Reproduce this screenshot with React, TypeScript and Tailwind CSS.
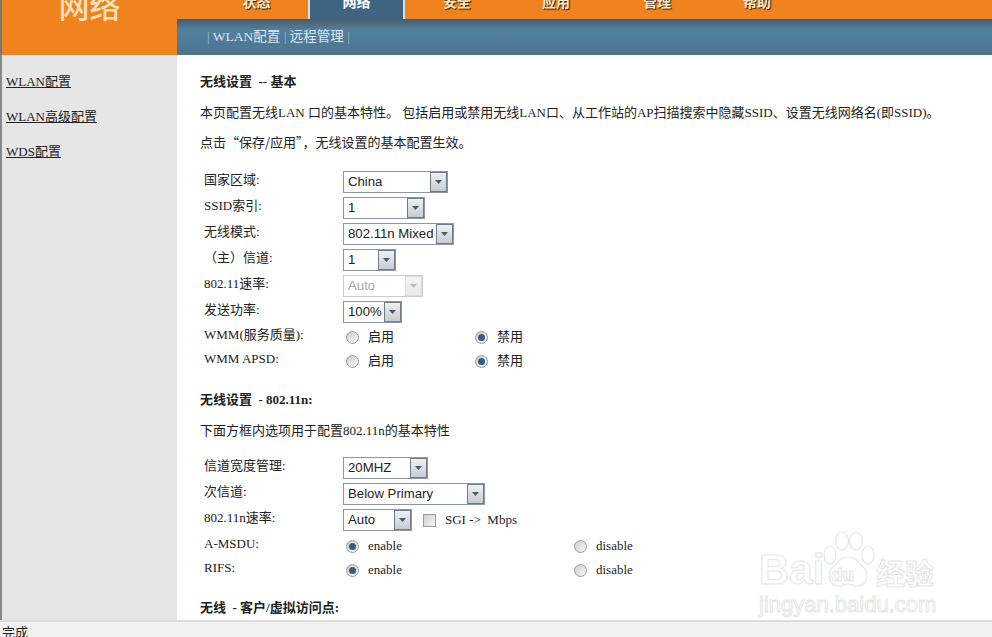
const cjk = "font-['Liberation_Serif','Noto_Sans_CJK_SC',serif]";

const tabs = [
  { label: "状态", width: "w-[131px] pl-[28px]" },
  { label: "网络", width: "w-[97px]", active: true },
  { label: "安全", width: "w-[104px]" },
  { label: "应用", width: "w-[94px]" },
  { label: "管理", width: "w-[108px]" },
  { label: "帮助", width: "w-[92px]" },
];

function Select({ value, width, disabled }: { value: string; width: string; disabled?: boolean }) {
  return (
    <div
      className={`flex h-[22px] items-center justify-between border pl-1 font-['Liberation_Sans',sans-serif] text-[13.2px] ${width} ${
        disabled ? "border-[#ccc] text-[#aaa]" : "border-[#8d98a4] text-[#222]"
      }`}
    >
      <span className="whitespace-nowrap">{value}</span>
      <span
        className={`flex h-full w-[17px] shrink-0 items-center justify-center border bg-gradient-to-b ${
          disabled ? "border-[#ddd] from-[#f4f4f4] to-[#e8e8e8]" : "border-[#6f7b86] from-[#eef0f3] to-[#c8ccd2]"
        }`}
      >
        <svg width="7" height="4" viewBox="0 0 7 4">
          <path d="M0 0h7L3.5 4z" fill={disabled ? "#bbb" : "#4d5a6b"} />
        </svg>
      </span>
    </div>
  );
}

function Radio({ checked }: { checked?: boolean }) {
  return (
    <span className="flex h-[13px] w-[13px] shrink-0 items-center justify-center rounded-full border border-[#9a9a9a] bg-gradient-to-br from-[#ccc] to-[#fafafa]">
      {checked && <span className="h-[7px] w-[7px] rounded-full bg-[#2f5f86]" />}
    </span>
  );
}

function Label({ text, className }: { text: string; className?: string }) {
  return <div className={`w-[143px] shrink-0 pl-1 text-[13px] text-[#222] ${className ?? ""}`}>{text}</div>;
}

function SelectRow({ label, children }: { label: string; children: React.ReactNode }) {
  return (
    <div className="flex h-[26px] items-center">
      <Label text={label} className="-mt-1" />
      {children}
    </div>
  );
}

function RadioRow({ label, on, off, first, cell }: { label: string; on: string; off: string; first?: boolean; cell: string }) {
  return (
    <div className="flex h-6 items-center">
      <Label text={label} className="-mt-1" />
      <div className={`flex items-center pl-[3px] ${cell}`}>
        <Radio checked={first} />
        <span className="ml-[9px] text-[13px]">{on}</span>
      </div>
      <div className="flex items-center">
        <Radio checked={!first} />
        <span className="ml-[9px] text-[13px]">{off}</span>
      </div>
    </div>
  );
}

function Watermark() {
  return (
    <div className="pointer-events-none absolute left-[758px] top-[530px] h-[88px] w-[182px] font-['Liberation_Sans',sans-serif] text-transparent [-webkit-text-stroke:1px_#e6e6e6]">
      <div className="absolute left-[1px] top-[18px] text-[42px] font-bold leading-[44px]">Bai</div>
      <svg className="absolute left-[63px] top-[1px]" width="54" height="58" viewBox="0 0 54 58" fill="#fff" stroke="#e6e6e6" strokeWidth="1.2">
        <ellipse cx="9" cy="24" rx="6" ry="9" />
        <ellipse cx="21" cy="10" rx="6.5" ry="9" />
        <ellipse cx="35" cy="10" rx="6.5" ry="9" />
        <ellipse cx="47" cy="24" rx="6" ry="9" />
        <path d="M27 26c-8 0-11 6-16 11-5 6-3 18 7 18 4 0 6-2 9-2s5 2 9 2c10 0 12-12 7-18-5-5-8-11-16-11z" />
      </svg>
      <div className="absolute left-[73px] top-[35px] text-[19px] font-bold leading-[20px]">du</div>
      <div className="absolute left-[118px] top-[25px] font-['Noto_Sans_CJK_SC',sans-serif] text-[29px] font-bold leading-[34px]">经验</div>
      <div className="absolute left-[1px] top-[63px] whitespace-nowrap text-[22px] leading-[24px]">jingyan.baidu.com</div>
    </div>
  );
}

export default function App() {
  return (
    <div className={`relative flex h-[637px] w-[992px] flex-col overflow-hidden bg-white text-[#222] ${cjk}`}>
      {/* top bar */}
      <div className="flex h-[55px] shrink-0">
        <div className="flex w-[177px] shrink-0 justify-center border-l-2 border-[#777] bg-[#f0831e]">
          <span className="-mt-[11px] h-8 text-[31px] font-medium leading-[38px] text-[#f5dfb8]">网络</span>
        </div>
        <div className="flex flex-1 flex-col">
          <div className="flex h-[19px] bg-[#f0831e]">
            {tabs.map((t) => (
              <div
                key={t.label}
                className={`flex justify-center overflow-hidden text-[14px] font-bold leading-[12px] ${t.width} ${
                  t.active
                    ? "border-x-2 border-[#d8dde0] bg-[#3f6482] text-white"
                    : "text-[#f5e8c8] [text-shadow:1px_1px_1px_#222]"
                }`}
              >
                <span className="-mt-[3px]">{t.label}</span>
              </div>
            ))}
          </div>
          <div className="flex h-[36px] items-center bg-gradient-to-b from-[#4a5a66] via-[#53809f] via-30% to-[#4c7590] pl-[30px] text-[#dbe6ee]">
            <span className="whitespace-pre text-[13.5px]">
              <span className="text-[#9db8cc]">|</span> WLAN配置 <span className="text-[#9db8cc]">|</span> 远程管理{" "}
              <span className="text-[#9db8cc]">|</span>
            </span>
          </div>
        </div>
      </div>

      <div className="flex min-h-0 flex-1">
        {/* left menu */}
        <div className="flex w-[177px] shrink-0 flex-col gap-[17px] border-l-2 border-[#888] bg-[#e6e6e6] pl-1 pt-[18px] text-[13px] leading-[18px]">
          <a className="underline">WLAN配置</a>
          <a className="underline">WLAN高级配置</a>
          <a className="underline">WDS配置</a>
        </div>

        {/* content */}
        <div className="flex-1 overflow-hidden pl-[23px] pt-[18px] text-[13px]">
          <div className="h-[18px] font-bold leading-[18px]">无线设置&nbsp; -- 基本</div>
          <p className="mt-[13px] whitespace-nowrap leading-[18px]">
            本页配置无线LAN 口的基本特性。 包括启用或禁用无线LAN口、从工作站的AP扫描搜索中隐藏SSID、设置无线网络名(即SSID)。
          </p>
          <p className="mt-[11px] font-['Noto_Sans_CJK_SC',sans-serif] leading-[18px]">点击“保存/应用”，无线设置的基本配置生效。</p>

          <div className="mt-[18px]">
            <SelectRow label="国家区域:">
              <Select value="China" width="w-[105px]" />
            </SelectRow>
            <SelectRow label="SSID索引:">
              <Select value="1" width="w-[82px]" />
            </SelectRow>
            <SelectRow label="无线模式:">
              <Select value="802.11n Mixed" width="w-[111px]" />
            </SelectRow>
            <SelectRow label="（主）信道:">
              <Select value="1" width="w-[53px]" />
            </SelectRow>
            <SelectRow label="802.11速率:">
              <Select value="Auto" width="w-[80px]" disabled />
            </SelectRow>
            <SelectRow label="发送功率:">
              <Select value="100%" width="w-[59px]" />
            </SelectRow>
            <RadioRow label="WMM(服务质量):" on="启用" off="禁用" cell="w-[132px]" />
            <RadioRow label="WMM APSD:" on="启用" off="禁用" cell="w-[132px]" />
          </div>

          <div className="mt-[18px] h-[18px] font-bold leading-[18px]">无线设置&nbsp; - 802.11n:</div>
          <p className="mt-[13px] leading-[18px]">下面方框内选项用于配置802.11n的基本特性</p>

          <div className="mt-[15px]">
            <SelectRow label="信道宽度管理:">
              <Select value="20MHZ" width="w-[85px]" />
            </SelectRow>
            <SelectRow label="次信道:">
              <Select value="Below Primary" width="w-[142px]" />
            </SelectRow>
            <SelectRow label="802.11n速率:">
              <Select value="Auto" width="w-[69px]" />
              <span className="ml-[11px] h-[13px] w-[13px] border border-[#999] bg-gradient-to-br from-[#ccc] to-[#fafafa]" />
              <span className="ml-[9px] whitespace-pre">SGI -&gt;  Mbps</span>
            </SelectRow>
            <div className="mt-px">
              <RadioRow label="A-MSDU:" on="enable" off="disable" first cell="w-[231px]" />
              <RadioRow label="RIFS:" on="enable" off="disable" first cell="w-[231px]" />
            </div>
          </div>

          <div className="mt-[17px] h-[18px] font-bold leading-[18px]">无线&nbsp; - 客户/虚拟访问点:</div>
        </div>
      </div>

      {/* status bar */}
      <div className="h-[17px] shrink-0 overflow-hidden border-t-2 border-[#dcdcdc] bg-[#f1f1f1] pl-[2px] pt-[3px] text-[13px] leading-[16px]">
        完成
      </div>

      <Watermark />
    </div>
  );
}
